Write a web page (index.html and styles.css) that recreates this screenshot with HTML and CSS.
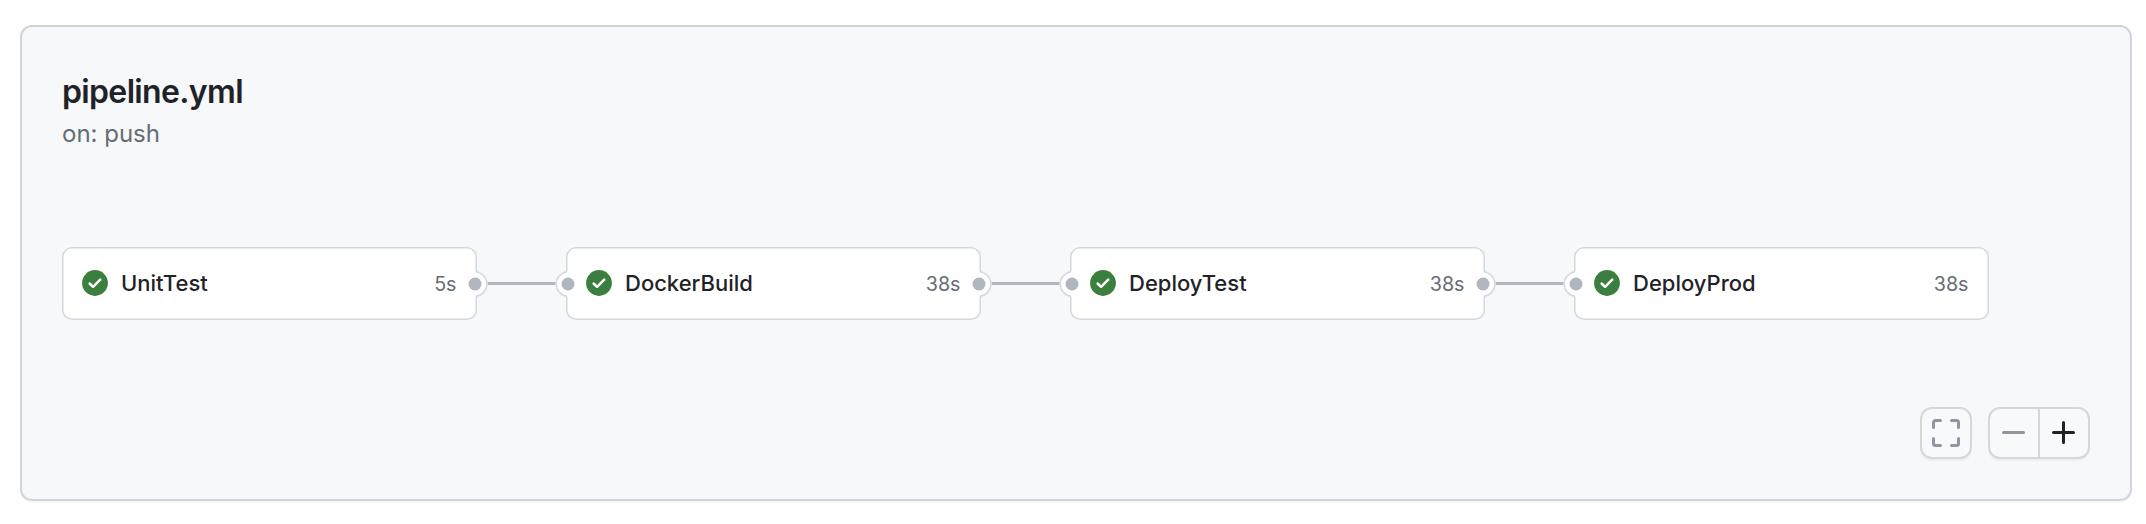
FILE: index.html
```html
<!DOCTYPE html>
<html lang="en">
<head>
<meta charset="utf-8">
<title>pipeline.yml</title>
<link rel="stylesheet" href="styles.css">
</head>
<body>
<svg class="defs" width="0" height="0">
  <symbol id="check" viewBox="0 0 26 26"><circle cx="13" cy="13" r="12.9" fill="#3b7f3f"/><path d="M7.600 13.500l3.500 3.300 7.100-7.100" fill="none" stroke="#fff" stroke-width="2.500" stroke-linecap="round" stroke-linejoin="round"/></symbol>
  <symbol id="port" viewBox="0 0 28 28"><circle cx="14" cy="14" r="12.600" fill="#fff"/><path d="M15 1.700a12.400 12.400 0 0 1 0 24.600" fill="none" stroke="#d3d8df" stroke-width="1.500"/><circle cx="14" cy="14" r="6.500" fill="#b0b6bf"/></symbol>
</svg>
<main class="panel">
  <header class="header">
    <h1 class="title">pipeline.yml</h1>
    <p class="trigger">on: push</p>
  </header>
  <section class="graph">
    <div class="job"><svg class="status"><use href="#check"/></svg><span class="name">UnitTest</span><span class="time">5s</span><svg class="port out"><use href="#port"/></svg></div>
    <div class="link"></div>
    <div class="job"><svg class="port in"><use href="#port"/></svg><svg class="status"><use href="#check"/></svg><span class="name">DockerBuild</span><span class="time">38s</span><svg class="port out"><use href="#port"/></svg></div>
    <div class="link"></div>
    <div class="job"><svg class="port in"><use href="#port"/></svg><svg class="status"><use href="#check"/></svg><span class="name">DeployTest</span><span class="time">38s</span><svg class="port out"><use href="#port"/></svg></div>
    <div class="link"></div>
    <div class="job"><svg class="port in"><use href="#port"/></svg><svg class="status"><use href="#check"/></svg><span class="name">DeployProd</span><span class="time">38s</span></div>
  </section>
  <footer class="controls">
    <button class="button" aria-label="Fit to window"><svg width="28" height="28" fill="none" stroke="#8f969f" stroke-width="3" stroke-linecap="round" stroke-linejoin="round"><path d="M1.500 8.500V3.500a2 2 0 0 1 2-2H8.500M19.500 1.500H24.500a2 2 0 0 1 2 2V8.500M26.500 19.500V24.500a2 2 0 0 1-2 2H19.500M8.500 26.500H3.500a2 2 0 0 1-2-2V19.500"/></svg></button>
    <div class="zoom">
      <button class="zoom-button" aria-label="Zoom out"><svg width="24" height="24" stroke="#8f969f" stroke-width="3" stroke-linecap="round"><path d="M1.500 11.500H21.500"/></svg></button>
      <button class="zoom-button" aria-label="Zoom in"><svg width="24" height="24" stroke="#1f2328" stroke-width="3" stroke-linecap="round"><path d="M1.500 11.500H21.500M11.500 1.500V21.500"/></svg></button>
    </div>
  </footer>
</main>
</body>
</html>
```
FILE: styles.css
```css
* { box-sizing: border-box; }
body { margin: 0; padding: 25px 14px 23px 20px; height: 524px; background: #fff; font-family: Inter, "Liberation Sans", sans-serif; color: #1f2328; }
.defs { position: absolute; }
.panel { display: flex; flex-direction: column; height: 476px; padding: 43px 40px 40px; border: 2px solid #d0d5dc; border-radius: 12px; background: #f6f8fa; box-shadow: 0 2px 0 rgba(31, 35, 40, 0.03); }
.header { height: 177px; }
.title { margin: 0; font-size: 32px; line-height: 44px; font-weight: 600; letter-spacing: -0.65px; }
.trigger { margin: 2px 0 0; font-size: 24px; line-height: 36px; color: #656d76; }
.graph { display: flex; align-items: center; height: 73px; }
.job { position: relative; display: flex; align-items: center; width: 415px; height: 73px; padding: 0 20.500px 1px 20px; border-radius: 10px; background: #fff; box-shadow: inset 0 0 0 1.500px #d3d8df; }
.status { width: 26px; height: 26px; flex: none; }
.name { flex: 1; margin-left: 13px; font-size: 22px; font-weight: 500; line-height: 32px; }
.time { margin-top: 2px; font-size: 19.700px; line-height: 28px; color: #656d76; }
.port { position: absolute; top: 22.500px; width: 28px; height: 28px; z-index: 1; }
.out { right: -12px; }
.in { left: -12.400px; transform: scaleX(-1); }
.link { width: 89px; height: 3px; background: #b0b6bf; }
.controls { display: flex; justify-content: flex-end; gap: 16px; margin-top: 87px; }
.button, .zoom { width: 52px; height: 52px; border: 2px solid #d5d8db; border-radius: 12px; background: #f8f9fb; box-shadow: 0 2px 0 rgba(31, 35, 40, 0.04); }
.button { display: flex; align-items: center; justify-content: center; padding: 0; }
.zoom { display: flex; width: 102px; }
.zoom-button { display: flex; flex: 1; align-items: center; justify-content: center; padding: 0; border: 0; background: transparent; }
.zoom-button + .zoom-button { border-left: 2px solid #d5d8db; }
```
